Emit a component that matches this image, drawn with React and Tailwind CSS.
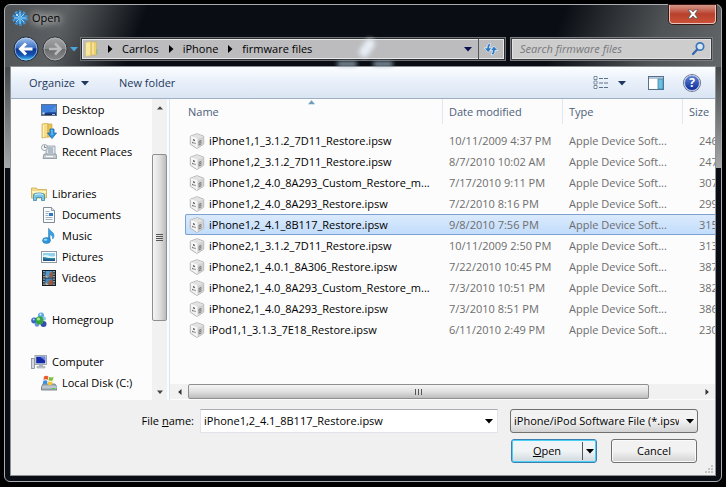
import React, { useState } from "react";

const files = [
  { name: "iPhone1,1_3.1.2_7D11_Restore.ipsw", date: "10/11/2009 4:37 PM", size: "246" },
  { name: "iPhone1,2_3.1.2_7D11_Restore.ipsw", date: "8/7/2010 10:02 AM", size: "247" },
  { name: "iPhone1,2_4.0_8A293_Custom_Restore_m...", date: "7/17/2010 9:11 PM", size: "307" },
  { name: "iPhone1,2_4.0_8A293_Restore.ipsw", date: "7/2/2010 8:16 PM", size: "299" },
  { name: "iPhone1,2_4.1_8B117_Restore.ipsw", date: "9/8/2010 7:56 PM", size: "315" },
  { name: "iPhone2,1_3.1.2_7D11_Restore.ipsw", date: "10/11/2009 2:50 PM", size: "313" },
  { name: "iPhone2,1_4.0.1_8A306_Restore.ipsw", date: "7/22/2010 10:45 PM", size: "387" },
  { name: "iPhone2,1_4.0_8A293_Custom_Restore_m...", date: "7/3/2010 10:51 PM", size: "382" },
  { name: "iPhone2,1_4.0_8A293_Restore.ipsw", date: "7/3/2010 8:51 PM", size: "386" },
  { name: "iPod1,1_3.1.3_7E18_Restore.ipsw", date: "6/11/2010 2:49 PM", size: "230" },
];

const Svg = ({ children, className = "size-4" }) => (
  <svg viewBox="0 0 16 16" className={`${className} shrink-0`} aria-hidden="true">
    {children}
  </svg>
);

const Arrow = ({ dir = "down", className = "size-2 text-black" }) => {
  const paths = {
    down: "M0 2h8L4 6.500z",
    up: "M0 6h8L4 1.500z",
    left: "M6 0v8L1.500 4z",
    right: "M2 0v8L6.500 4z",
  };
  return (
    <svg viewBox="0 0 8 8" className={`shrink-0 ${className}`} aria-hidden="true">
      <path fill="currentColor" d={paths[dir]} />
    </svg>
  );
};

const AppIcon = () => (
  <Svg>
    <circle cx="8" cy="8" r="6.500" fill="none" stroke="#3f94d6" strokeWidth="2.500" strokeDasharray="2.600 1.500" />
    <circle cx="8" cy="8" r="5.500" fill="#2f86cf" />
    <path d="M8 2v12M2 8h12M4 4l8 8M12 4l-8 8" stroke="#a5dcfb" strokeWidth="1" />
    <circle cx="8" cy="8" r="2" fill="#5db5ee" />
    <circle cx="5" cy="5" r="1" fill="#d3f0ff" />
  </Svg>
);

const DesktopIcon = () => (
  <Svg>
    <rect x="0.500" y="2.500" width="15" height="11" fill="#2257b8" stroke="#5d6f8c" />
    <path d="M1 3h14v4L1 12z" fill="#3f7fdc" />
    <path d="M7 10c3-1 5-3 8-6v6z" fill="#6ba9ee" opacity=".6" />
    <rect x="1" y="11.500" width="14" height="1.500" fill="#1c2c4c" />
    <rect x="1.500" y="10.500" width="2" height="2" fill="#cfe8f8" />
    <rect x="11" y="12" width="3" height="1" fill="#9fc4ea" />
  </Svg>
);

const DownloadsIcon = () => (
  <Svg>
    <path d="M1 1l6-1v14l-6 1z" fill="#f6dc85" stroke="#cda84a" strokeWidth=".7" />
    <path d="M7 1h4v13H7z" fill="#e7c257" stroke="#cda84a" strokeWidth=".7" />
    <path d="M2.500 2v12" stroke="#fff3bf" />
    <path d="M9 6h4v4h2.500L11 15.500 6.500 10H9z" fill="#2f95df" stroke="#1567ae" strokeWidth=".8" />
    <path d="M10 7h1v5" stroke="#9fdbff" fill="none" strokeWidth=".8" />
  </Svg>
);

const RecentIcon = () => (
  <Svg>
    <path d="M5 2h9v9H5z" fill="#dfe5e9" stroke="#8f9ba5" strokeWidth=".8" />
    <path d="M7 4h5M7 6h5M7 8h5" stroke="#7f95a8" />
    <path d="M3 10h12l1 4.500H2z" fill="#c3cbd1" stroke="#848e97" strokeWidth=".8" />
    <path d="M5 12.500h7" stroke="#f6f8fa" />
    <circle cx="3.500" cy="3.500" r="3" fill="#f3f5f6" stroke="#929ca5" strokeWidth=".9" />
    <path d="M3.500 1.500v2h2" fill="none" stroke="#5d6770" strokeWidth=".8" />
  </Svg>
);

const LibrariesIcon = () => (
  <Svg>
    <path d="M0.500 2h5l1 1.500h9V12H.5z" fill="#f3dc86" stroke="#c9a94f" strokeWidth=".8" />
    <path d="M1 5h14v2H1z" fill="#fff3bd" />
    <path d="M2.500 8.500c2-2 9-2 11 0V14.500h-3v-3h-5v3h-3z" fill="#79c6e6" stroke="#3b88ae" strokeWidth=".8" />
    <path d="M4 8.700c2-1 6-1 8 0" stroke="#dff5ff" fill="none" />
  </Svg>
);

const DocumentsIcon = () => (
  <Svg>
    <path d="M2.500.5h8l3 3v12h-11z" fill="#fbfcfd" stroke="#7e8a96" />
    <path d="M10.500.5v3h3" fill="#d9e0e7" stroke="#7e8a96" strokeWidth=".8" />
    <path d="M4.500 4.500h4M4.500 6.500h3M4.500 8.500h3M4.500 10.500h7M4.500 12.500h7" stroke="#8a9cb1" strokeWidth=".8" />
    <rect x="8" y="6" width="4" height="3" fill="#2f78c4" />
  </Svg>
);

const MusicIcon = () => (
  <Svg>
    <path d="M8 .5c1 3 5 3.500 5 7 0 1.500-.5 2.500-1.500 3.500.5-3-1-4-2.500-4.500V12H7.500V.5z" fill="#3aa0e2" stroke="#1d75b5" strokeWidth=".5" />
    <ellipse cx="5.500" cy="12.500" rx="4" ry="3" fill="#2b95dc" stroke="#1a6dab" strokeWidth=".5" />
    <ellipse cx="4.500" cy="11.700" rx="1.800" ry="1" fill="#9bdbfb" />
  </Svg>
);

const PicturesIcon = () => (
  <Svg>
    <rect x=".5" y="2.500" width="15" height="11" fill="#fff" stroke="#8e99a3" />
    <rect x="2" y="4" width="12" height="8" fill="#8ed2ef" />
    <path d="M2 7c4-3 7 2 12 0v2H2z" fill="#e3f6fc" />
    <path d="M2 8c4 0 5 2 12 1v3H2z" fill="#207f93" />
    <path d="M2 10.500h12V12H2z" fill="#29518d" />
  </Svg>
);

const VideosIcon = () => (
  <Svg>
    <rect x="1.500" y=".5" width="13" height="15" fill="#26313d" stroke="#151c24" />
    <path d="M3 1v14M13 1v14" stroke="#e1e9ef" strokeWidth="1.200" strokeDasharray="1.200 1.300" />
    <rect x="4.500" y="1" width="7" height="6.500" fill="#4e9bd6" />
    <rect x="4.500" y="8.500" width="7" height="6.500" fill="#4389c6" />
    <path d="M11.500 2c-3 0-4 2-3 5.500h3zM11.500 9.500c-3 0-5 2-4 5.500h4z" fill="#9c5c3c" />
    <path d="M4.500 5l3 2.500h-3zM4.500 12l3 3h-3z" fill="#d3b58d" />
  </Svg>
);

const HomegroupIcon = () => (
  <Svg>
    <circle cx="10" cy="3.500" r="3" fill="#59a7df" />
    <circle cx="3.200" cy="8.500" r="3" fill="#3564c4" />
    <circle cx="12.500" cy="12" r="3" fill="#334eac" />
    <circle cx="13" cy="6.500" r="2" fill="#8dc5ef" />
    <circle cx="6" cy="12.500" r="2.300" fill="#6d93dd" />
    <circle cx="8.500" cy="8.500" r="4" fill="#36a53f" />
    <circle cx="7.500" cy="7" r="1.600" fill="#aceb9d" />
    <circle cx="2.700" cy="7.500" r="1" fill="#bcd9f9" />
    <circle cx="9.500" cy="2.500" r="1" fill="#dff2ff" />
  </Svg>
);

const ComputerIcon = () => (
  <Svg>
    <rect x=".5" y="4.500" width="3" height="10" fill="#d4dae0" stroke="#828b94" strokeWidth=".8" />
    <rect x="4" y="1.500" width="11.500" height="9" fill="#dfe4e9" stroke="#8b949d" strokeWidth=".8" />
    <rect x="5.200" y="2.700" width="9" height="6.600" fill="#1729a6" />
    <path d="M9 2.700h5.200v4z" fill="#6687ea" />
    <path d="M8 10.500h4v2H8z" fill="#a9b1b9" />
    <path d="M6 12.500h8v1.500H6z" fill="#c7cdd3" stroke="#8b949d" strokeWidth=".5" />
  </Svg>
);

const DiskIcon = () => (
  <Svg>
    <path d="M2 9h12l2 3v3H.5v-3z" fill="#a9b4bc" stroke="#65727c" strokeWidth=".8" />
    <path d="M.8 12h15" stroke="#dbe2e7" strokeWidth=".8" />
    <rect x="11" y="13" width="3" height="1" fill="#4bce54" />
    <path d="M3 1.500c1.500-1 3-1 4.300 0L6.700 5c-1.400-1-2.900-.8-4.200 0z" fill="#e9592b" />
    <path d="M8 1.800c1.500.9 3 .9 4.500 0L11.800 5.200c-1.500.8-3 .7-4.300 0z" fill="#7fbf3c" />
    <path d="M2.300 5.800c1.400-.8 2.900-.8 4.200.2l-.7 3.500c-1.400-.9-2.800-.8-4.200 0z" fill="#3f8fd9" />
    <path d="M7.300 6.200c1.400.9 2.900.8 4.300 0L10.900 9.600c-1.400.8-2.900.7-4.200 0z" fill="#f7c42f" />
  </Svg>
);

const IpswIcon = () => (
  <Svg>
    <path d="M8 .7l6.700 2.500v8L8 15.500 1.300 11.200v-8z" fill="#f3f3f3" stroke="#b4b4b4" />
    <path d="M1.800 3.500L8 1.200l6.200 2.300L8 5.800z" fill="#e2e2e2" />
    <path d="M8 5.800l6.200-2.300V11L8 15z" fill="#d2d2d2" />
    <path d="M1.800 3.700L8 6v9" stroke="#fff" strokeWidth=".8" fill="none" />
    <path d="M4 6l1.800.7v1.500L4 7.600zM3.200 8.800l1.300.5v1.400l-1.300-.6zM5.500 9.600l1 .4v1.300l-1-.5z" fill="#555" />
    <path d="M9.700 8l2.600-1v4.200L9.700 12.500z" fill="#6d6d6d" />
    <path d="M10.400 8.800l1.200-.5v.9l-1.200.5zM10.400 10.500l1.200-.5v.8l-1.200.6z" fill="#eee" />
  </Svg>
);

const places = [
  { label: "Desktop", icon: DesktopIcon, child: true },
  { label: "Downloads", icon: DownloadsIcon, child: true },
  { label: "Recent Places", icon: RecentIcon, child: true },
  null,
  { label: "Libraries", icon: LibrariesIcon },
  { label: "Documents", icon: DocumentsIcon, child: true },
  { label: "Music", icon: MusicIcon, child: true },
  { label: "Pictures", icon: PicturesIcon, child: true },
  { label: "Videos", icon: VideosIcon, child: true },
  null,
  { label: "Homegroup", icon: HomegroupIcon },
  null,
  { label: "Computer", icon: ComputerIcon },
  { label: "Local Disk (C:)", icon: DiskIcon, child: true },
];

const TitleBar = () => (
  <div className="flex h-8 items-start justify-between pl-[7px]">
    <div className="flex items-center gap-1 pt-[5px]">
      <AppIcon />
      <h1 className="[text-shadow:0_0_6px_#ddd,0_0_8px_#ccc,0_0_12px_#bbb]">Open</h1>
    </div>
    <button
      aria-label="Close"
      className="mr-[5px] flex h-[19px] w-[47px] items-center justify-center rounded-b-[4px] border border-t-0 border-[#e6c4bd] bg-linear-to-b from-[#d5968a] from-0% via-[#b8402c] via-50% to-[#cc5138] shadow-[0_0_0_1px_#3b1813]"
    >
      <svg viewBox="0 0 12 10" className="h-2.5 w-3" aria-hidden="true">
        <path d="M1 .8h3L6 3l2-2.200h3L7.800 5 11 9.200H8L6 7 4 9.200H1L4.200 5z" fill="#fff" stroke="#5e5555" strokeWidth=".8" />
      </svg>
    </button>
  </div>
);

const NavButtons = () => (
  <div className="flex items-center">
    <button aria-label="Back">
      <svg viewBox="0 0 26 26" className="size-[26px]">
        <defs>
          <linearGradient id="back" x1="0" y1="0" x2="0" y2="1">
            <stop offset="0" stopColor="#a9c8ef" />
            <stop offset=".45" stopColor="#3b70c2" />
            <stop offset=".5" stopColor="#0c3590" />
            <stop offset=".75" stopColor="#1553b5" />
            <stop offset="1" stopColor="#47d3fc" />
          </linearGradient>
        </defs>
        <circle cx="13" cy="13" r="12" fill="url(#back)" stroke="#202a3a" />
        <circle cx="13" cy="13" r="11" fill="none" stroke="#b9d3f3" strokeOpacity=".7" />
        <path d="M19.500 13H8M13 7.500L7.500 13l5.500 5.500" fill="none" stroke="#fff" strokeWidth="3" />
      </svg>
    </button>
    <button aria-label="Forward" className="ml-[3px]">
      <svg viewBox="0 0 26 26" className="size-[26px]">
        <defs>
          <linearGradient id="forward" x1="0" y1="0" x2="0" y2="1">
            <stop offset="0" stopColor="#a4a6a8" />
            <stop offset=".48" stopColor="#86888a" />
            <stop offset=".52" stopColor="#696b6d" />
            <stop offset="1" stopColor="#8b8d8f" />
          </linearGradient>
        </defs>
        <circle cx="13" cy="13" r="12" fill="url(#forward)" stroke="#34373b" />
        <circle cx="13" cy="13" r="11" fill="none" stroke="#c3c5c7" strokeOpacity=".6" />
        <path d="M7 13h11M13 7.500l5.500 5.500-5.500 5.500" fill="none" stroke="#b9bbbd" strokeWidth="2.500" />
      </svg>
    </button>
    <button aria-label="Recent locations" className="ml-[2px]">
      <Arrow className="size-2 text-[#4ba3dc]" />
    </button>
  </div>
);

const AddressRow = () => (
  <div className="flex h-6 items-center px-2">
    <NavButtons />
    <div className="relative ml-[2px] flex h-6 flex-1 border border-[#6d7073] bg-[#2a2d31] p-px">
      <nav
        aria-label="Address"
        className="flex flex-1 items-center gap-2 border border-[#e9e9e9] bg-[#bcbcbe] pl-[2px] whitespace-nowrap"
      >
        <svg viewBox="0 0 13 16" className="h-4 w-[13px]" aria-hidden="true">
          <path d="M.5 1.500L6 .5v14l-5.500 1z" fill="#f8e79c" stroke="#d8bb5c" strokeWidth=".6" />
          <path d="M6 1h5.500v13H6z" fill="#ecd06e" stroke="#d0ae4d" strokeWidth=".6" />
          <path d="M8 1.500v12" stroke="#fdf3be" />
          <path d="M11.500 8h1v5h-1z" fill="#7ab58e" />
        </svg>
        <Arrow dir="right" />
        <a href="#carrlos">Carrlos</a>
        <Arrow dir="right" />
        <a href="#iphone">iPhone</a>
        <Arrow dir="right" />
        <a href="#firmware">firmware files</a>
        <button aria-label="Previous locations" className="mr-[6px] ml-auto flex">
          <Arrow className="size-2 text-[#0a1050]" />
        </button>
      </nav>
      <button
        aria-label="Refresh"
        className="flex w-[25px] items-center justify-center border border-l-0 border-[#e9e9e9] bg-[#bcbcbe] shadow-[-1px_0_0_#55585b]"
      >
        <Svg>
          <path d="M7.500 2.500C4.800 2.500 4 4 4 7H1l4.200 4.500L9 7H6.500c0-2 .3-2.500 1-2.500z" fill="#2f7cc6" stroke="#eff7ff" strokeWidth=".7" />
          <path d="M8.500 14c2.700 0 3.500-1.500 3.500-4.500h3L10.800 5 7.500 9.500h2c0 2-.3 2.500-1 2.500z" fill="#2f7cc6" stroke="#eff7ff" strokeWidth=".7" />
        </Svg>
      </button>
      {/* wallpaper showing through the glass */}
      <span className="pointer-events-none absolute top-0 left-[281px] h-5 w-[10px] rotate-[35deg] rounded-full bg-[#e6edf5] blur-[2px]" />
      <span className="pointer-events-none absolute top-6 left-[256px] h-1 w-5 rounded-full bg-[#9fb4c2] blur-[2px]" />
      <span className="pointer-events-none absolute top-6 left-[292px] h-1 w-5 rounded-full bg-[#9fb4c2] blur-[2px]" />
    </div>
    <div className="ml-1 h-6 w-[29%] border border-[#7b7d80] bg-[#3a3d41] p-px">
      <div className="flex h-full items-center border border-[#e2e2e2] bg-[#cdcdce] pr-1 pl-[7px]">
        <input
          type="search"
          aria-label="Search"
          placeholder="Search firmware files"
          className="min-w-0 flex-1 bg-transparent italic outline-none placeholder:text-[#77787a]"
        />
        <Svg>
          <circle cx="10" cy="5.500" r="3.700" fill="#d7e6f5" stroke="#3a76b8" strokeWidth="1.700" />
          <path d="M7.200 8.500L3 13" stroke="#3466a8" strokeWidth="2.200" strokeLinecap="round" />
        </Svg>
      </div>
    </div>
  </div>
);

const Toolbar = () => (
  <div className="flex h-8 shrink-0 items-center border-b border-[#a0afc3] bg-linear-to-b from-[#fcfeff] from-0% via-[#e9f0fa] via-45% to-[#dae5f3] pr-[15px] pl-[18px] text-[#1e395b]">
    <button className="flex items-center gap-[6px]">
      Organize <Arrow className="size-2 text-[#1e395b]" />
    </button>
    <button className="ml-[30px]">New folder</button>
    <button aria-label="Change your view" className="ml-auto flex items-center gap-[9px]">
      <Svg>
        <path d="M1 1.500h3v3H1zM1 6h3v3H1zM1 10.500h3v3H1z" fill="#fff" stroke="#6c7f96" strokeWidth=".9" />
        <path d="M6 3.500h4M11 3.500h4M6 8h4M11 8h4M6 12.500h4M11 12.500h4" stroke="#5d7189" />
      </Svg>
      <Arrow className="size-2 text-[#1e395b]" />
    </button>
    <button aria-label="Show the preview pane" className="ml-[22px]">
      <Svg>
        <rect x=".5" y="1.500" width="15" height="13" fill="#fff" stroke="#54708f" />
        <path d="M1 3h14" stroke="#7390ae" />
        <rect x="10" y="4" width="5" height="10" fill="#6cc0de" stroke="#3e86a8" strokeWidth=".8" />
      </Svg>
    </button>
    <button
      aria-label="Get help"
      className="ml-5 flex size-4 items-center justify-center rounded-full border border-[#b3c0e4] bg-linear-to-b from-[#5f80d4] to-[#102b9b] text-xs font-bold text-white shadow-[0_0_0_1px_#67748d]"
    >
      ?
    </button>
  </div>
);

const thumbX = "border border-[#8e8f8f] rounded-[2px] bg-linear-to-b from-[#f5f5f5] via-[#e0e0e1] to-[#bcbcbd]";
const thumbY = "border border-[#8e8f8f] rounded-[2px] bg-linear-to-r from-[#f5f5f5] via-[#e0e0e1] to-[#bcbcbd]";

const Sidebar = () => (
  <aside className="flex w-[159px] shrink-0 border-r border-[#d6e5f5]">
    <ul className="min-w-0 flex-1 overflow-hidden">
      {places.map((place, index) => {
        if (!place) return <li key={index} className="h-[21px]" />;
        const Icon = place.icon;
        return (
          <li key={index} className={place.child ? "pl-[30px]" : "pl-5"}>
            <a href="#place" className="flex h-[21px] items-center gap-[5px] whitespace-nowrap">
              <Icon />
              {place.label}
            </a>
          </li>
        );
      })}
    </ul>
    <div className="mr-[2px] flex w-[15px] flex-col bg-[#f1f1f2]">
      <button aria-label="Scroll up" className="flex h-[17px] items-center justify-center">
        <Arrow dir="up" className="size-[6px] text-[#444]" />
      </button>
      <div className="grow-[39]" />
      <div className={`flex grow-[163] flex-col items-center justify-center gap-px ${thumbY}`}>
        <span className="h-px w-[7px] bg-[#555]" />
        <span className="h-px w-[7px] bg-[#555]" />
        <span className="h-px w-[7px] bg-[#555]" />
        <span className="h-px w-[7px] bg-[#555]" />
      </div>
      <div className="grow-[64]" />
      <button aria-label="Scroll down" className="flex h-[17px] items-center justify-center">
        <Arrow className="size-[6px] text-[#444]" />
      </button>
    </div>
  </aside>
);

const columns = ["Date modified", "Type", "Size"];

const FileList = ({ selected, onSelect }) => (
  <section className="flex min-w-0 flex-1 flex-col">
    <div className="min-h-0 flex-1 overflow-hidden pl-[15px]">
      <table className="w-[600px] table-fixed border-collapse text-left whitespace-nowrap">
        <colgroup>
          <col className="w-[257px]" />
          <col className="w-[120px]" />
          <col className="w-[120px]" />
          <col />
        </colgroup>
        <thead>
          <tr className="h-[31px] align-top text-[#4c607a]">
            <th className="relative p-0 pl-[3px] leading-[25px] font-normal">
              Name
              <Arrow dir="up" className="absolute top-0 left-[123px] size-[7px] text-[#6e9dbd]" />
            </th>
            {columns.map((col) => (
              <th key={col} className="p-0 font-normal">
                <div className="h-[25px] border-l border-[#e0e8f2] pl-[6px] leading-[25px]">{col}</div>
              </th>
            ))}
          </tr>
        </thead>
        <tbody>
          {files.map((file) => (
            <tr
              key={file.name}
              onClick={() => onSelect(file.name)}
              className={
                selected === file.name
                  ? "h-[21px] rounded-[2px] bg-linear-to-b from-[#dcebfc] to-[#c1dcfc] outline -outline-offset-1 outline-[#7da2ce]"
                  : "h-[21px]"
              }
            >
              <td className="p-0">
                <div className="flex items-center gap-1 pl-1">
                  <IpswIcon />
                  {file.name}
                </div>
              </td>
              <td className="p-0 pl-[7px] text-[#6d6d6d]">{file.date}</td>
              <td className="p-0 pl-[7px] text-[#6d6d6d]">Apple Device Soft...</td>
              <td className="p-0 pl-[17px] text-[#6d6d6d]">{file.size}</td>
            </tr>
          ))}
        </tbody>
      </table>
    </div>
    <div className="mb-px flex h-[15px] shrink-0 bg-[#f1f1f2] pl-px">
      <button aria-label="Scroll left" className="flex w-[17px] items-center justify-center">
        <Arrow dir="left" className="size-[6px] text-[#333]" />
      </button>
      <div className={`flex grow-[459] items-center justify-center gap-[2px] ${thumbX}`}>
        <span className="h-[6px] w-px bg-[#555]" />
        <span className="h-[6px] w-px bg-[#555]" />
        <span className="h-[6px] w-px bg-[#555]" />
      </div>
      <div className="grow-[50]" />
      <button aria-label="Scroll right" className="flex w-[17px] items-center justify-center">
        <Arrow dir="right" className="size-[6px] text-[#333]" />
      </button>
    </div>
  </section>
);

const Footer = ({ fileName, onChange }) => (
  <div className="shrink-0 bg-[#f0f0f0] pt-[9px] pr-[17px]">
    <div className="flex items-center">
      <label htmlFor="file-name" className="w-[189px] shrink-0 pr-[6px] text-right">
        File <u>n</u>ame:
      </label>
      <div className="flex h-6 flex-1 items-center border border-[#e2e3ea] border-t-[#abadb3] bg-white pr-1 pl-[3px]">
        <input
          id="file-name"
          value={fileName}
          onChange={(e) => onChange(e.target.value)}
          className="min-w-0 flex-1 bg-transparent outline-none"
        />
        <button aria-label="File name history" className="flex">
          <Arrow />
        </button>
      </div>
      <div className="relative ml-3 w-[188px]">
        <select
          aria-label="File type"
          className="block h-6 w-full appearance-none rounded-[3px] border border-[#707070] bg-linear-to-b from-[#f2f2f2] from-50% to-[#d2d2d2] pr-[18px] pl-[3px]"
        >
          <option>iPhone/iPod Software File (*.ipsw)</option>
        </select>
        <span className="pointer-events-none absolute top-2 right-1">
          <Arrow />
        </span>
      </div>
    </div>
    <div className="mt-[6px] flex justify-end gap-[14px] pr-px">
      <div className="flex h-6 w-[86px] items-center rounded-[3px] border border-[#3c7fb1] bg-linear-to-b from-[#f0f4f6] from-50% to-[#cfd8dd] shadow-[inset_0_0_0_1px_#48d0f5]">
        <button className="flex-1">
          <u>O</u>pen
        </button>
        <button
          aria-label="More open options"
          className="flex h-[18px] w-[14px] items-center justify-center border-l border-[#555]"
        >
          <Arrow />
        </button>
      </div>
      <button className="h-6 w-[86px] rounded-[3px] border border-[#707070] bg-linear-to-b from-[#f2f2f2] from-50% to-[#d2d2d2] shadow-[inset_0_0_0_1px_#fafafa]">
        Cancel
      </button>
    </div>
    <div className="-mr-[15px] flex h-3 items-end justify-end pb-px">
      <svg viewBox="0 0 9 9" className="size-[9px]" aria-hidden="true">
        <path d="M7 0h2v2H7zM7 3h2v2H7zM7 6h2v2H7zM4 3h2v2H4zM4 6h2v2H4zM1 6h2v2H1z" fill="#c4c4c4" />
      </svg>
    </div>
  </div>
);

const App = () => {
  const [selected, setSelected] = useState("iPhone1,2_4.1_8B117_Restore.ipsw");

  return (
    <div className="flex h-screen bg-black p-1 pb-[5px] font-['Open_Sans','Noto_Sans',sans-serif] text-[11px] leading-4 text-black">
      <div className="flex min-w-0 flex-1 flex-col rounded-[6px] border border-[#a9adb1] bg-[#0a0e14] bg-[linear-gradient(110deg,#505355_0,#5c5f61_60px,#0a0e14_135px,#0a0e14_76%,#505355_90%,#636668_100%),linear-gradient(#45484a,#a5a7a9),linear-gradient(#45484a,#a5a7a9)] bg-[size:100%_62px,6px_101px,6px_101px] bg-[position:0_0,0_62px,100%_62px] bg-no-repeat">
        <TitleBar />
        <AddressRow />
        <div className="mx-[5px] my-[5px] flex min-h-0 flex-1 flex-col border border-[#8d9194] bg-[#fcfcfc]">
          <Toolbar />
          <div className="flex min-h-0 flex-1">
            <Sidebar />
            <FileList selected={selected} onSelect={setSelected} />
          </div>
          <Footer fileName={selected} onChange={setSelected} />
        </div>
      </div>
    </div>
  );
};

export default App;
